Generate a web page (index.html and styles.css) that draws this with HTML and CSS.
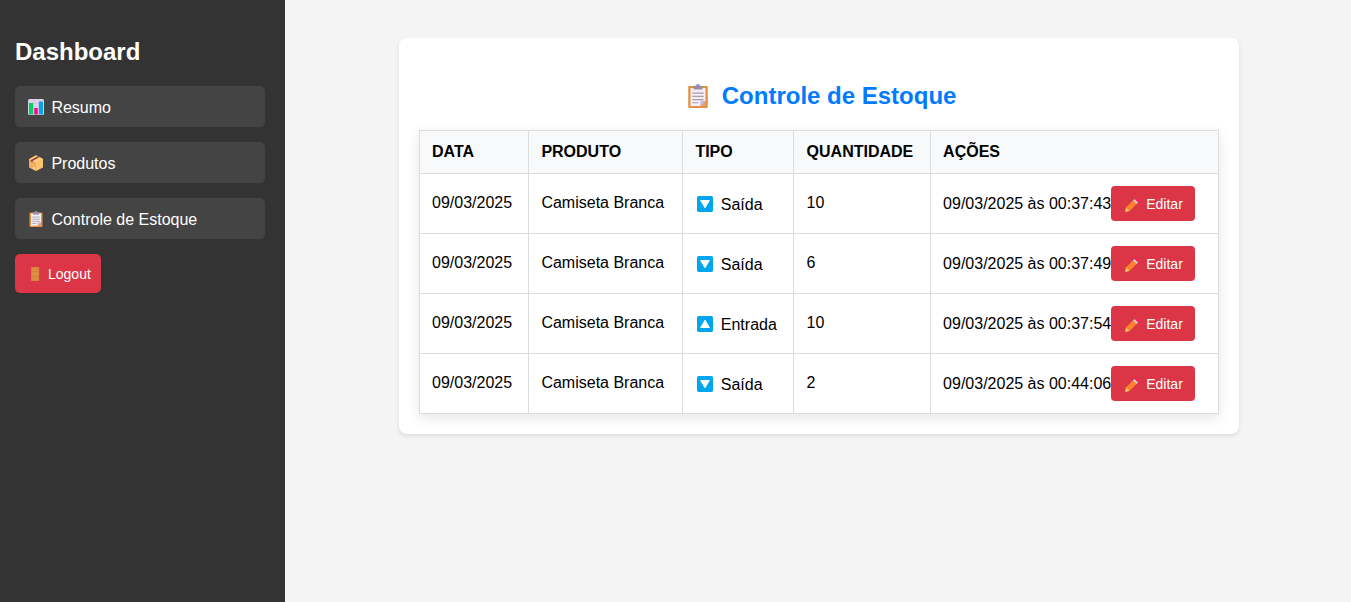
FILE: index.html
```html
<!DOCTYPE html>
<html lang="pt-BR">
<head>
<meta charset="utf-8">
<title>Controle de Estoque</title>
<link rel="stylesheet" href="styles.css">
</head>
<body>
<svg class="symbols" aria-hidden="true">
  <symbol id="chart" viewBox="0 0 16 16">
    <rect width="16" height="16" rx="1.5" fill="#ded3ea"/>
    <path d="M0 4.5h16M5.5 0v16M10.5 0v16" stroke="#c8bad6" stroke-width=".6"/>
    <path d="M1 4h4v11.5H1z" fill="#00d26a"/>
    <path d="M6.2 9h3.6v6.5H6.2z" fill="#f70a8d"/>
    <path d="M11 2.5h4v13h-4z" fill="#00a6ed"/>
  </symbol>
  <symbol id="box" viewBox="0 0 16 16">
    <path d="M1 4.2 8 .3l7 3.6v8.3L8 16l-7-3.8z" fill="#f3ad61"/>
    <path d="M1 4.2 8 7.8V16l-7-3.8z" fill="#f3ad61"/>
    <path d="M1 4.2 8 .3l7 3.6-7 3.9z" fill="#ffce7c"/>
    <path d="m8 7.8 7-3.9v8.3L8 16z" fill="#fac36f"/>
    <path d="M2.7 4.9 9.9.9l1.9 1-7.1 4v1.6l-2-1.1z" fill="#8f5148"/>
    <path d="m5 11.8 1.7.9v1.6L5 13.4z" fill="#f3eef8"/>
  </symbol>
  <symbol id="clipboard" viewBox="0 0 16 16">
    <rect x="1.5" y="1.4" width="13" height="14.6" rx=".8" fill="#e39141"/>
    <path d="M3 2.6h10v8.7l-3.5 3.4H3z" fill="#f3eef8"/>
    <path d="M13 11.2v3.5H9.5z" fill="#e0a377"/>
    <path d="M9.5 14.7v-3.5H13z" fill="#cdb9dc"/>
    <path d="M6.7 1.1a1.3 1.1 0 0 1 2.6 0h1.7v2.5H5V1.1z" fill="#998ea4"/>
    <path d="M4.2 6.1h7.6M4.2 8.3h7.6M4.2 10.4h7.6M4.2 12.5h4" stroke="#a3a0a8" stroke-width=".8"/>
  </symbol>
  <symbol id="door" viewBox="0 0 10 14">
    <rect x="1" width="8.2" height="14" rx=".4" fill="#d0803a"/>
    <path d="M1.8.7h6.6v12.6H1.8z" fill="#dc8d43"/>
    <path d="M2 4.5h6M2 9.5h6" stroke="#cf7f39" stroke-width=".6"/>
    <circle cx="7.6" cy="7" r=".5" fill="#f9c23c"/>
  </symbol>
  <symbol id="down" viewBox="0 0 16 16">
    <rect width="16" height="16" rx="1.8" fill="#00a6ed"/>
    <path d="M3.5 4h9q.6 0 .3.6l-4.3 7.2q-.5.7-1 0L3.2 4.6Q2.9 4 3.5 4z" fill="#fff"/>
  </symbol>
  <symbol id="up" viewBox="0 0 16 16">
    <rect width="16" height="16" rx="1.8" fill="#00a6ed"/>
    <path d="M3.5 12h9q.6 0 .3-.6L8.5 4.2q-.5-.7-1 0l-4.3 7.2q-.3.6.3.6z" fill="#fff"/>
  </symbol>
  <symbol id="pencil" viewBox="0 0 14 14">
    <path d="M8.4 2.1 11.9 5.6 4.9 12.8.9 13.7q-.6 0-.5-.6l.7-3.8z" fill="#ff822d"/>
    <path d="m1.1 9.8 3.3 3.2-3.5.7q-.6 0-.5-.6z" fill="#ffce7c"/>
    <path d="m8.1 2.4 1.4-1.4 3.5 3.5-1.4 1.4z" fill="#d3d3d3"/>
    <path d="m9.5 1 .5-.5q.8-.8 1.8 0l1.7 1.7q.8.9 0 1.8l-.5.5z" fill="#fb2060"/>
  </symbol>
</svg>
<div class="app">
  <aside class="sidebar">
    <h2 class="brand">Dashboard</h2>
    <nav class="menu">
      <a class="menu-item"><svg class="icon"><use href="#chart"/></svg>Resumo</a>
      <a class="menu-item"><svg class="icon"><use href="#box"/></svg>Produtos</a>
      <a class="menu-item"><svg class="icon"><use href="#clipboard"/></svg>Controle de Estoque</a>
    </nav>
    <button class="button logout"><svg class="icon-door"><use href="#door"/></svg>Logout</button>
  </aside>
  <main class="content">
    <section class="card">
      <h2 class="title"><svg class="icon-title"><use href="#clipboard"/></svg>Controle de Estoque</h2>
      <table class="stock">
        <colgroup><col class="c-date"><col class="c-product"><col class="c-type"><col class="c-amount"><col></colgroup>
        <thead>
          <tr><th>DATA</th><th>PRODUTO</th><th>TIPO</th><th>QUANTIDADE</th><th>AÇÕES</th></tr>
        </thead>
        <tbody>
          <tr><td>09/03/2025</td><td>Camiseta Branca</td><td><div class="type"><svg class="icon"><use href="#down"/></svg>Saída</div></td><td>10</td><td><div class="actions">09/03/2025 às 00:37:43<button class="button edit"><svg class="icon-pencil"><use href="#pencil"/></svg>Editar</button></div></td></tr>
          <tr><td>09/03/2025</td><td>Camiseta Branca</td><td><div class="type"><svg class="icon"><use href="#down"/></svg>Saída</div></td><td>6</td><td><div class="actions">09/03/2025 às 00:37:49<button class="button edit"><svg class="icon-pencil"><use href="#pencil"/></svg>Editar</button></div></td></tr>
          <tr><td>09/03/2025</td><td>Camiseta Branca</td><td><div class="type"><svg class="icon"><use href="#up"/></svg>Entrada</div></td><td>10</td><td><div class="actions">09/03/2025 às 00:37:54<button class="button edit"><svg class="icon-pencil"><use href="#pencil"/></svg>Editar</button></div></td></tr>
          <tr><td>09/03/2025</td><td>Camiseta Branca</td><td><div class="type"><svg class="icon"><use href="#down"/></svg>Saída</div></td><td>2</td><td><div class="actions">09/03/2025 às 00:44:06<button class="button edit"><svg class="icon-pencil"><use href="#pencil"/></svg>Editar</button></div></td></tr>
        </tbody>
      </table>
    </section>
  </main>
</div>
</body>
</html>
```
FILE: styles.css
```css
* { box-sizing: border-box; }
body { margin: 0; background: #f4f4f4; color: #000; font: 16px/18px "Liberation Sans", Arial, sans-serif; }
.symbols { display: none; }
.app { display: flex; height: 602px; }
.sidebar { width: 285px; flex: none; padding: 38px 20px 0 15px; background: #333; color: #fff; }
.brand { margin: 0 0 20px; font-size: 24px; line-height: 28px; }
.menu { display: flex; flex-direction: column; gap: 15px; margin-bottom: 15px; }
.menu-item { display: flex; align-items: center; height: 41px; padding: 2px 10px 0 13px; border-radius: 5px; background: #444; }
.icon { width: 16px; height: 16px; margin-right: 7.4px; flex: none; }
.menu-item .icon { margin-bottom: 1px; }
.button { display: flex; align-items: center; border: 0; border-radius: 4px; background: #dc3545; color: #fff; font: 14px/16px "Liberation Sans", Arial, sans-serif; }
.logout { width: 86px; height: 39px; padding: 1px 0 0 15px; border-radius: 5px; }
.icon-door { width: 10px; height: 14px; margin-right: 8px; }
.content { flex: 1; padding: 38px 112px 0 114px; }
.card { width: 840px; height: 396px; padding: 44px 20px 20px; border-radius: 8px; background: #fff; box-shadow: 0 2px 4px rgba(0, 0, 0, .1); }
.title { display: flex; align-items: center; justify-content: center; height: 28px; margin: 0 0 20px; padding-left: 4.6px; color: #007bff; font-size: 24px; line-height: 28px; }
.icon-title { width: 24px; height: 24px; margin-right: 11.6px; }
.stock { width: 800px; table-layout: fixed; border-collapse: collapse; box-shadow: 0 4px 12px rgba(0, 0, 0, .1); }
.stock th, .stock td { height: 60px; padding: 0 0 2px 12px; border: 1px solid #dcdcdc; text-align: left; vertical-align: middle; white-space: nowrap; }
.stock th:nth-child(n+2), .stock td:nth-child(n+2) { padding-left: 12.4px; }
.stock th:nth-child(4), .stock td:nth-child(4) { padding-left: 12.6px; }
.stock th:nth-child(5), .stock td:nth-child(5) { padding-left: 12.1px; }
.stock th:nth-child(n) { height: 43px; padding-bottom: 0; background: #f8f9fb; }
.c-date { width: 109px; }
.c-product { width: 154px; }
.c-type { width: 111px; }
.c-amount { width: 137px; }
.type { display: flex; align-items: center; padding: 4px 0 0 2px; }
.type .icon { margin-top: -1px; margin-bottom: 1px; }
.actions { display: flex; align-items: center; padding-top: 2px; }
.edit { width: 84px; height: 35px; padding: 1px 0 0 14px; }
.icon-pencil { width: 14px; height: 14px; margin: 1px 7px 0 0; }
```
